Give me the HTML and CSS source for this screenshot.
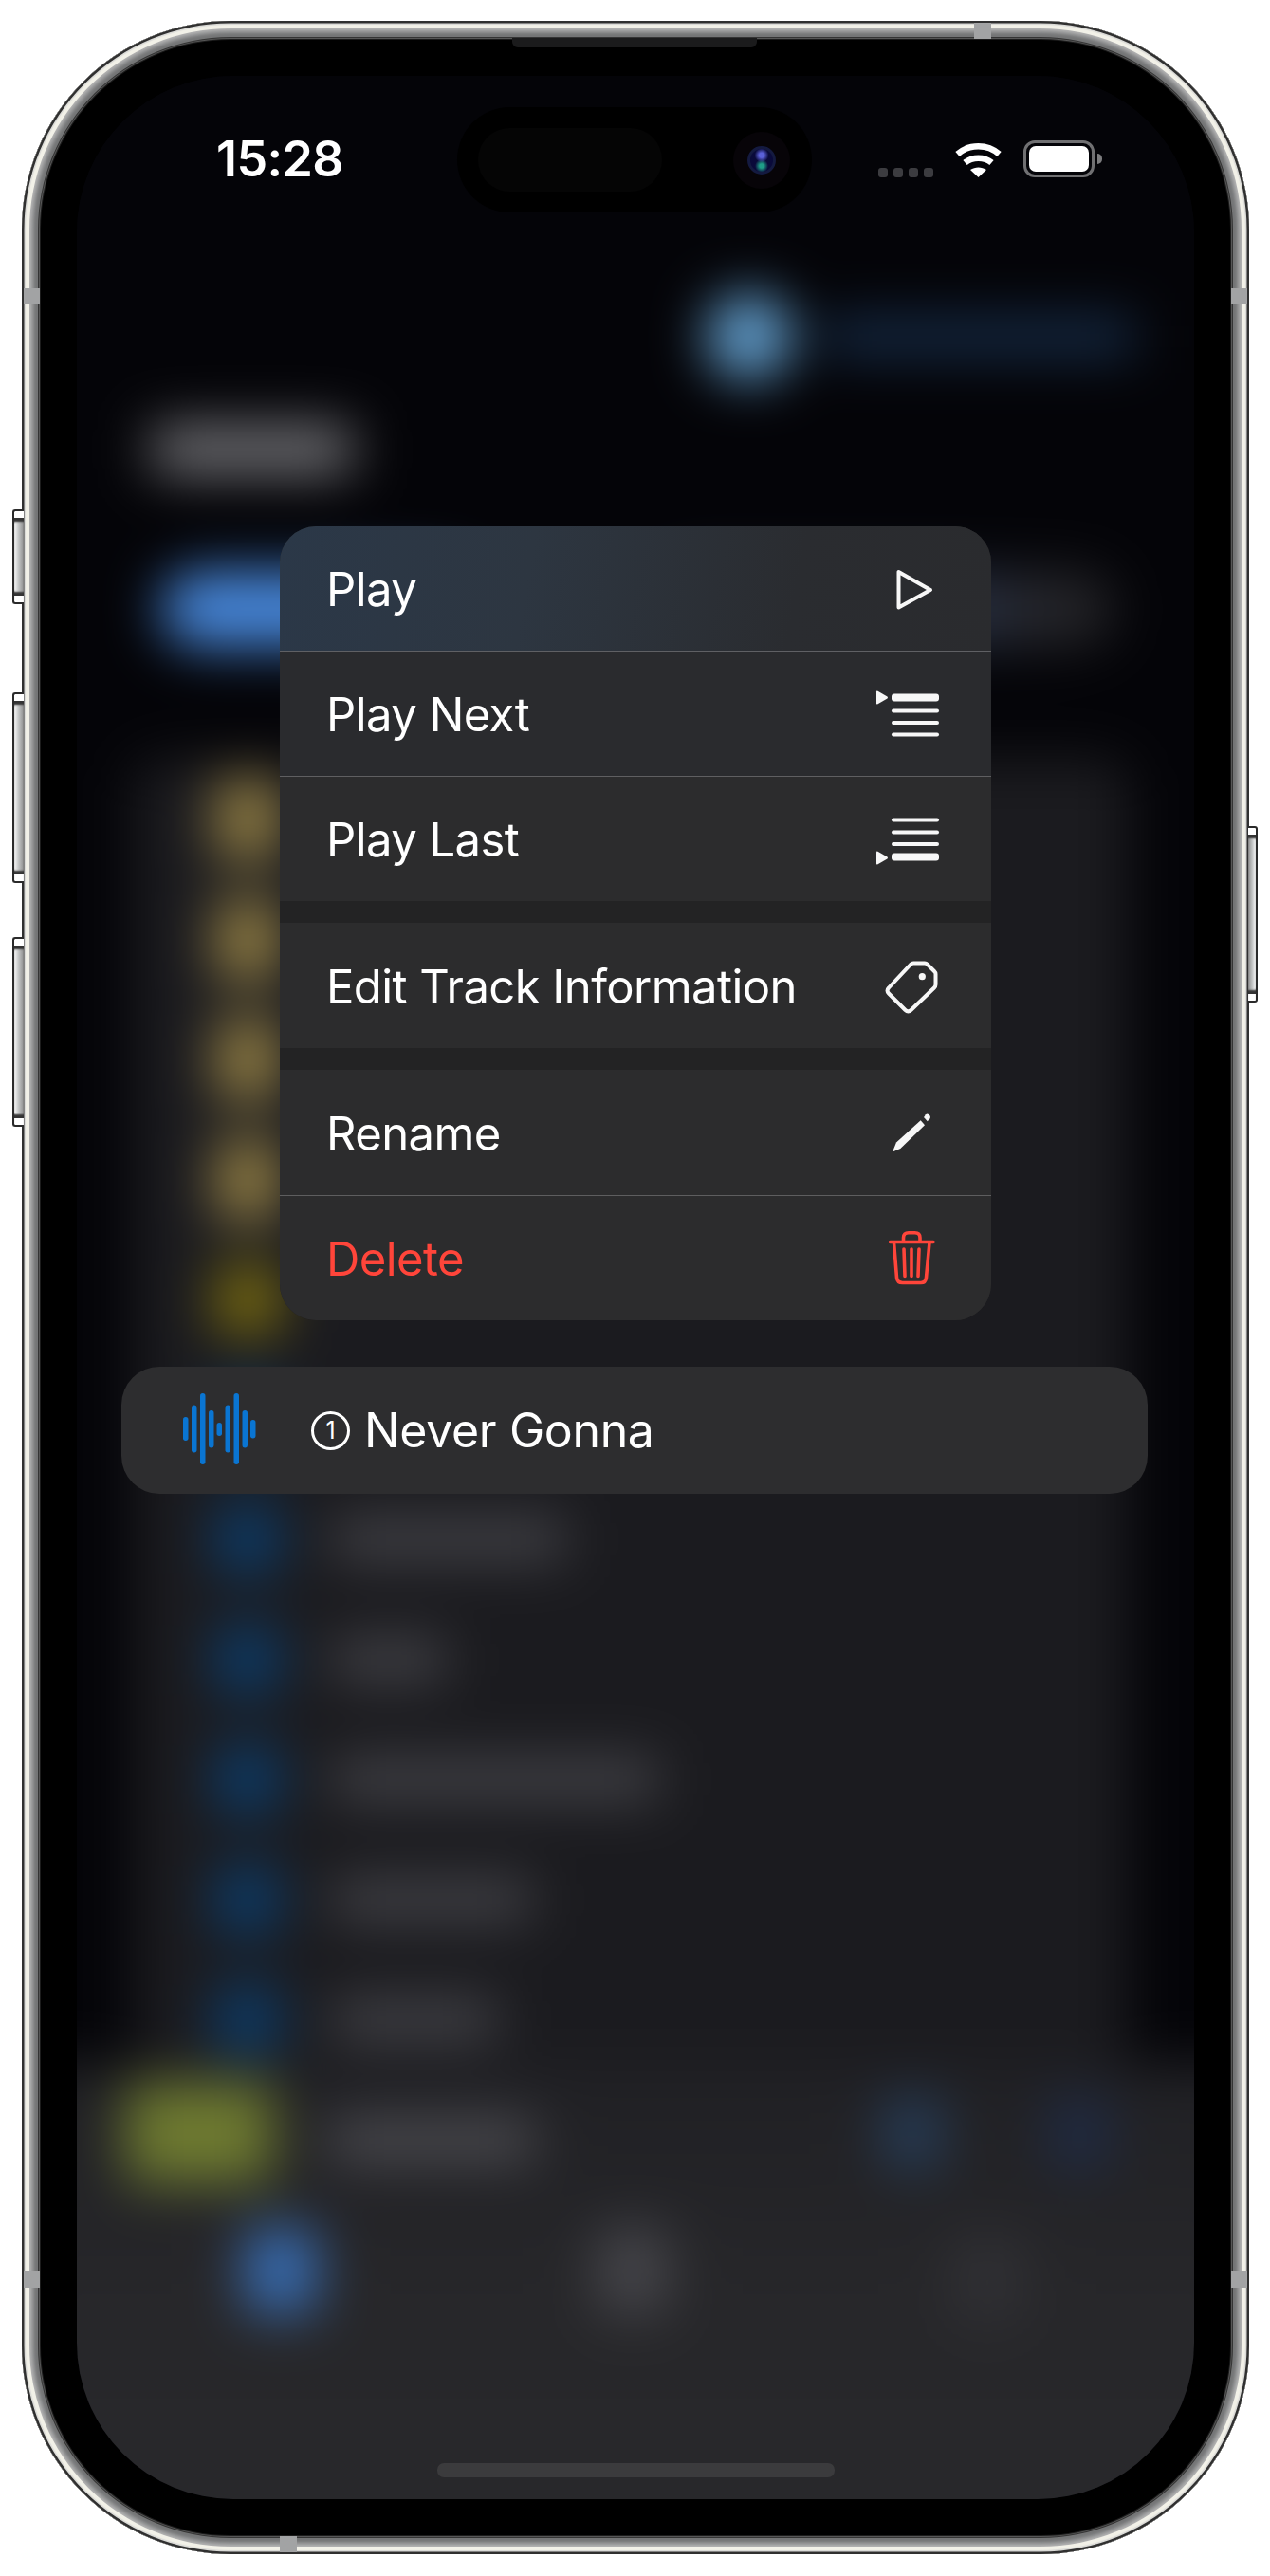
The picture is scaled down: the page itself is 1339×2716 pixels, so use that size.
FILE: index.html
```html
<!DOCTYPE html>
<html lang="en">
<head>
<meta charset="utf-8">
<title>Never Gonna</title>
<link rel="stylesheet" href="styles.css">
</head>
<body>
<div class="device">
  <span class="btn btn-action"></span>
  <span class="btn btn-up"></span>
  <span class="btn btn-down"></span>
  <span class="btn btn-power"></span>
  <span class="band band-left-top"></span>
  <span class="band band-right-top"></span>
  <span class="band band-top"></span>
  <span class="band band-left-bottom"></span>
  <span class="band band-right-bottom"></span>
  <span class="band band-bottom"></span>
  <span class="speaker"></span>

  <div class="screen">
    <div class="backdrop">
      <div class="bd-header"><span class="bd-avatar"></span><span class="bd-link"></span></div>
      <div class="bd-title"></div>
      <div class="bd-buttons"><span class="bd-primary"></span><span class="bd-secondary"></span></div>
      <div class="bd-list">
        <div class="bd-row"><span class="bd-icon bd-gold"></span></div>
        <div class="bd-row"><span class="bd-icon bd-gold"></span></div>
        <div class="bd-row"><span class="bd-icon bd-gold"></span></div>
        <div class="bd-row"><span class="bd-icon bd-gold"></span></div>
        <div class="bd-row"><span class="bd-icon bd-olive"></span></div>
        <div class="bd-row"><span class="bd-icon bd-blue"></span></div>
        <div class="bd-row"><span class="bd-icon bd-blue"></span><span class="bd-text bd-w246"></span></div>
        <div class="bd-row"><span class="bd-icon bd-blue"></span><span class="bd-text bd-w120"></span></div>
        <div class="bd-row"><span class="bd-icon bd-blue"></span><span class="bd-text bd-w344"></span></div>
        <div class="bd-row"><span class="bd-icon bd-blue"></span><span class="bd-text bd-w210"></span></div>
        <div class="bd-row"><span class="bd-icon bd-blue"></span><span class="bd-text bd-w174"></span></div>
      </div>
      <div class="bd-player">
        <div class="bd-track">
          <span class="bd-cover"></span>
          <span class="bd-track-name"></span>
          <span class="bd-ctl bd-ctl-a"></span>
          <span class="bd-ctl bd-ctl-b"></span>
        </div>
        <div class="bd-tabs">
          <span class="bd-tab bd-tab-a"></span>
          <span class="bd-tab bd-tab-b"></span>
          <span class="bd-tab bd-tab-c"></span>
        </div>
      </div>
    </div>

    <div class="island">
      <span class="island-pill"></span>
      <span class="camera"><span class="lens"></span></span>
    </div>

    <div class="foreground">
      <header class="status">
        <span class="time">15:28</span>
        <div class="indicators">
          <div class="signal"><i></i><i></i><i></i><i></i></div>
          <svg class="wifi" width="51" height="37" viewBox="0 0 51 37" aria-hidden="true">
            <path class="wifi-arc" d="M3.500 12.500C16 1.500 35 1.500 47.500 12.500"/>
            <path class="wifi-arc" d="M11.500 21.500C19 15 32 15 39.500 21.500"/>
            <path class="wifi-dot" d="M17 29C22 25.500 29 25.500 34 29L25.500 37Z"/>
          </svg>
          <div class="battery"><span class="battery-fill"></span></div>
          <span class="battery-tip"></span>
        </div>
      </header>

      <nav class="menu">
        <div class="menu-group">
          <div class="menu-row menu-row-first">
            <span>Play</span>
            <svg class="menu-icon" width="70" height="60" viewBox="0 0 70 60" aria-hidden="true">
              <path class="icon-line" d="M24.500 12V49.500L58 31Z"/>
            </svg>
          </div>
          <div class="menu-row menu-row-second">
            <span>Play Next</span>
            <svg class="menu-icon" width="70" height="60" viewBox="0 0 70 60" aria-hidden="true">
              <path class="icon-fill" d="M1 6.500Q1 5 2.500 5.800L12.500 11.500Q13.500 12.500 12.500 13.500L2.500 19.200Q1 20 1 18.500Z"/>
              <rect class="icon-fill" x="17" y="8.500" width="50" height="8" rx="3"/>
              <rect class="icon-fill" x="17" y="24.500" width="50" height="4" rx="2"/>
              <rect class="icon-fill" x="17" y="37" width="50" height="4" rx="2"/>
              <rect class="icon-fill" x="17" y="49.500" width="50" height="4" rx="2"/>
            </svg>
          </div>
          <div class="menu-row menu-row-third">
            <span>Play Last</span>
            <svg class="menu-icon" width="70" height="60" viewBox="0 0 70 60" aria-hidden="true">
              <rect class="icon-fill" x="17" y="7.500" width="50" height="4" rx="2"/>
              <rect class="icon-fill" x="17" y="20.500" width="50" height="4" rx="2"/>
              <rect class="icon-fill" x="17" y="33" width="50" height="4" rx="2"/>
              <rect class="icon-fill" x="17" y="44.500" width="50" height="8" rx="3"/>
              <path class="icon-fill" d="M1 43.500Q1 42 2.500 42.800L12.500 48.500Q13.500 49.500 12.500 50.500L2.500 56.200Q1 57 1 55.500Z"/>
            </svg>
          </div>
        </div>
        <div class="menu-group">
          <div class="menu-row">
            <span>Edit Track Information</span>
            <svg class="menu-icon" width="70" height="60" viewBox="0 0 70 60" aria-hidden="true">
              <path class="icon-line" d="M40 6.500H52Q53.500 6.500 55 8L62 15Q63.500 16.500 63.500 18V29Q63.500 31 62 32.500L37.500 56Q34.500 59 31.500 56L14 38.500Q11 35.500 14 32.500L37 8Q38.500 6.500 40 6.500Z"/>
              <circle class="icon-fill" cx="49.300" cy="20.700" r="3.600"/>
            </svg>
          </div>
        </div>
        <div class="menu-group">
          <div class="menu-row">
            <span>Rename</span>
            <svg class="menu-icon" width="70" height="60" viewBox="0 0 70 60" aria-hidden="true">
              <path class="icon-fill" d="M18 50.500L22 40.500L47.700 17.200L52 22.200L26.300 47Z"/>
              <path class="icon-fill" d="M51 14L53 11.200Q54.500 10 56 11L57.500 12.500Q58.500 14 57.500 15.300L54.800 18.200Z"/>
            </svg>
          </div>
          <div class="menu-row menu-row-divided menu-danger">
            <span>Delete</span>
            <svg class="menu-icon" width="70" height="60" viewBox="0 0 70 60" aria-hidden="true">
              <path class="icon-danger" d="M15.500 12.500H61"/>
              <path class="icon-danger" d="M29.500 12V8Q29.500 2.800 35 2.800H41.500Q47 2.800 47 8V12"/>
              <path class="icon-danger" d="M19.500 13L22.500 50Q23 55.500 28.500 55.500H48Q53 55.500 53.500 50L57 13"/>
              <path class="icon-danger" d="M30 20L31 48.500M38 20V48.500M46 20L45 48.500"/>
            </svg>
          </div>
        </div>
      </nav>

      <div class="track">
        <svg class="wave" width="78" height="78" viewBox="0 0 78 78" aria-hidden="true">
          <rect x="1" y="25" width="5.500" height="25" rx="2.700"/>
          <rect x="10" y="12.500" width="5.500" height="50" rx="2.700"/>
          <rect x="19" y="0" width="5.500" height="75" rx="2.700"/>
          <rect x="28" y="18" width="5.500" height="39.500" rx="2.700"/>
          <rect x="36.500" y="31" width="5.500" height="14" rx="2.700"/>
          <rect x="45.500" y="12.500" width="5.500" height="50" rx="2.700"/>
          <rect x="54.500" y="0" width="5.500" height="75" rx="2.700"/>
          <rect x="63.500" y="18" width="5.500" height="39.500" rx="2.700"/>
          <rect x="72" y="28" width="5.500" height="19.500" rx="2.700"/>
        </svg>
        <span class="track-number">1</span>
        <span class="track-name">Never Gonna</span>
      </div>

      <span class="home-bar"></span>
    </div>
  </div>
</div>
</body>
</html>
```

FILE: styles.css
```css
* { box-sizing: border-box; }

html, body { margin: 0; background: #fff; }

body {
  width: 1339px;
  height: 2716px;
  overflow: hidden;
  font-family: Inter, "Liberation Sans", sans-serif;
  color: #fff;
}

.device {
  position: relative;
  width: 1294px;
  height: 2671px;
  margin: 22px 0 0 23px;
  padding: 58px;
  border-radius: 220px;
  background: #000;
  box-shadow:
    inset 0 0 0 2.500px #303030,
    inset 0 0 1px 4px #d9d9d6,
    inset 0 0 0 8px #f2f1e8,
    inset 0 0 3px 10px #b4b4b4,
    inset 0 0 3px 13px #929394,
    inset 0 0 0 17px #747576,
    inset 0 0 0 18px #343434,
    inset 0 0 0 19px #565656,
    inset 0 0 0 20px #1c1c1c;
}

/* Hardware details sitting on the frame */
.btn {
  position: absolute;
  width: 12px;
  border: 2px solid #2a2a2a;
  border-right: 0;
  border-radius: 3px 0 0 3px;
  background: linear-gradient(90deg, #fafafa, #c4c6c6 45%, #8e8e8e);
  box-shadow: inset 0 9px 0 -2px #fff, inset 0 12px 2px -1px #333, inset 0 -9px 0 -2px #fff, inset 0 -12px 2px -1px #333;
}
.btn-action { left: -10px; top: 515px; height: 100px; }
.btn-up { left: -10px; top: 708px; height: 201px; }
.btn-down { left: -10px; top: 966px; height: 200px; }
.btn-power {
  right: -9px;
  top: 849px;
  width: 10px;
  height: 186px;
  transform: scaleX(-1);
}

.band { position: absolute; background: #a2a3a4; }
.band-left-top { left: 2px; top: 282px; width: 17px; height: 17px; }
.band-right-top { right: 2px; top: 282px; width: 17px; height: 17px; }
.band-top { left: 1004px; top: 2px; width: 18px; height: 17px; }
.band-left-bottom { left: 2px; top: 2372px; width: 17px; height: 18px; }
.band-right-bottom { right: 2px; top: 2372px; width: 17px; height: 18px; }
.band-bottom { left: 272px; bottom: 2px; width: 18px; height: 17px; }

.speaker {
  position: absolute;
  left: 517px;
  top: 18px;
  width: 258px;
  height: 10px;
  border-radius: 0 0 6px 6px;
  background: #1b1b1c;
}

.screen {
  position: relative;
  width: 100%;
  height: 100%;
  overflow: hidden;
  border-radius: 165px;
  background: #05050a;
}

/* Blurred page behind the context menu */
.backdrop {
  position: absolute;
  inset: -60px;
  overflow: hidden;
  background: #040408;
  filter: blur(28px);
}

.bd-header {
  display: flex;
  align-items: center;
  gap: 33px;
  height: 90px;
  margin: 290px 0 0 724px;
}
.bd-avatar { width: 90px; height: 90px; border-radius: 50%; background: #65a3d3; }
.bd-link { width: 329px; height: 40px; background: #172e4b; }

.bd-title {
  width: 212px;
  height: 50px;
  margin: 49px 0 0 139px;
  border-radius: 8px;
  background: #76767a;
}

.bd-buttons { display: flex; height: 80px; margin: 103px 0 0 149px; }
.bd-primary { width: 330px; border-radius: 40px; background: #4889dd; }
.bd-secondary {
  width: 480px;
  margin-left: 195px;
  border-radius: 40px;
  background: linear-gradient(90deg, #28344c 60%, #262a36 75%, #242428 85%);
}

.bd-list {
  width: 1050px;
  height: 1374px;
  margin: 118px 0 0 119px;
  padding-top: 1px;
  border-radius: 28px;
  background: #1b1b1f;
}
.bd-row {
  display: flex;
  align-items: center;
  gap: 55px;
  height: 126.5px;
  padding-left: 87px;
}
.bd-icon { width: 68px; height: 72px; border-radius: 10px; flex: none; }
.bd-gold { height: 86px; background: #937f44; }
.bd-olive { background: #7a6c10; }
.bd-blue { background: #0c3c6a; }
.bd-text { height: 44px; border-radius: 6px; background: #434348; }
.bd-w246 { width: 246px; }
.bd-w120 { width: 120px; }
.bd-w344 { width: 344px; }
.bd-w210 { width: 210px; }
.bd-w174 { width: 174px; }

.bd-player {
  height: 560px;
  background: linear-gradient(180deg, #202024, #27272a 45%, #29292c);
}
.bd-track {
  display: flex;
  align-items: center;
  height: 120px;
  padding: 30px 0 0 111px;
}
.bd-cover { width: 156px; height: 106px; border-radius: 12px; background: #6e7a30; }
.bd-track-name { width: 216px; height: 44px; margin: 14px 0 0 59px; background: #4d4d52; }
.bd-ctl { width: 62px; height: 76px; border-radius: 14px; }
.bd-ctl-a { margin-left: 368px; background: #263d59; }
.bd-ctl-b { margin-left: 114px; background: #1f2b45; }

.bd-tabs { display: flex; align-items: center; height: 100px; margin-top: 50px; padding-left: 237px; }
.bd-tab { width: 76px; height: 90px; border-radius: 14px; }
.bd-tab-a { background: #386db3; }
.bd-tab-b { margin-left: 295px; background: #45454a; }
.bd-tab-c { margin: 16px 0 0 298px; background: #303034; }

/* Dynamic Island */
.island {
  position: absolute;
  left: 401px;
  top: 33px;
  width: 374px;
  height: 111px;
  border-radius: 56px;
  background: #000;
}
.island-pill {
  position: absolute;
  left: 22px;
  top: 22px;
  width: 194px;
  height: 67px;
  border-radius: 34px;
  background: #050505;
}
.camera {
  position: absolute;
  left: 291px;
  top: 26px;
  width: 60px;
  height: 60px;
  border-radius: 50%;
  background: #070408;
}
.lens {
  position: absolute;
  left: 15px;
  top: 15px;
  width: 30px;
  height: 30px;
  border-radius: 50%;
  border: 3px solid #141a40;
  background:
    radial-gradient(circle at 50% 28%, #5b60d8 0 12%, transparent 35%),
    radial-gradient(circle at 50% 75%, #1f9c88 0 10%, transparent 32%),
    #0a0a3a;
}

/* Foreground: status bar, menu and lifted row */
.foreground {
  position: absolute;
  inset: 0;
  display: flex;
  flex-direction: column;
}

.status {
  display: flex;
  align-items: flex-start;
  height: 475px;
  padding: 62px 97px 0 147px;
}
.time {
  font-size: 52px;
  font-weight: 600;
  line-height: 52px;
  letter-spacing: -0.6px;
}
.indicators { display: flex; align-items: flex-end; margin: 6px 0 0 auto; height: 39px; }
.signal { display: flex; gap: 6px; margin-right: 22px; }
.signal i { display: block; width: 10px; height: 10px; border-radius: 3px; background: #3c3c40; }
.wifi { display: block; margin-right: 22px; }
.wifi-arc { fill: none; stroke: #fff; stroke-width: 6.500; }
.wifi-dot { fill: #fff; }
.battery {
  width: 75px;
  height: 39px;
  padding: 3px;
  border: 3px solid #707072;
  border-radius: 12px;
}
.battery-fill { display: block; height: 100%; border-radius: 7px; background: #fff; }
.battery-tip {
  align-self: center;
  width: 5px;
  height: 11px;
  margin-left: 3px;
  border-radius: 0 6px 6px 0;
  background: #7c7c7e;
}

.menu {
  display: flex;
  flex-direction: column;
  gap: 23px;
  width: 750px;
  margin-left: 214px;
  overflow: hidden;
  border-radius: 38px;
  background: #232324;
}
.menu-row {
  display: flex;
  align-items: center;
  justify-content: space-between;
  height: 132px;
  padding: 0 52px 0 49px;
  background: #2c2c2d;
  font-size: 49px;
  font-weight: 400;
  letter-spacing: -0.580px;
}
.menu-row > span { padding-top: 2px; }
.menu-row-first {
  height: 131px;
  background: linear-gradient(100deg, #2b3848 0%, #2d3641 35%, #2a2c30 72%, #2a2b2e 100%);
}
.menu-row-second {
  border-top: 1px solid #5f6064;
  background: #2a2b2e;
}
.menu-row-third { border-top: 1px solid #5f5f61; }
.menu-row-divided { border-top: 1px solid #5e5e5f; }
.menu-danger { color: #ff453a; }
.menu-icon { display: block; flex: none; }
.icon-line { fill: none; stroke: #f7f7f7; stroke-width: 4; stroke-linejoin: round; }
.icon-fill { fill: #f7f7f7; }
.icon-danger { fill: none; stroke: #ff453a; stroke-width: 3.600; stroke-linecap: round; stroke-linejoin: round; }

.track {
  display: flex;
  align-items: center;
  width: 1082px;
  height: 134px;
  margin: 49px 0 0 47px;
  padding-left: 64px;
  border-radius: 40px;
  background: #2d2d2f;
  font-size: 50px;
}
.wave { display: block; flex: none; fill: #0a75d2; }
.track-number {
  display: flex;
  align-items: center;
  justify-content: center;
  flex: none;
  width: 41px;
  height: 41px;
  margin-left: 58px;
  border: 3px solid #fff;
  border-radius: 50%;
  font-size: 25px;
  font-weight: 400;
}
.track-name { margin-left: 15px; letter-spacing: -0.350px; }

.home-bar {
  display: block;
  width: 419px;
  height: 15px;
  margin: auto 0 23px 380px;
  border-radius: 7px;
  background: #3b3b3d;
}
```
